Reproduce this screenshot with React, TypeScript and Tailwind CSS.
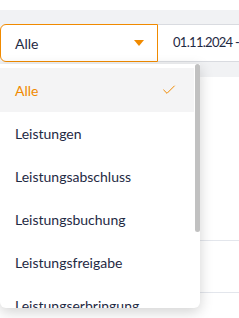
import { Check } from 'lucide-react'

const options = [
  'Alle',
  'Leistungen',
  'Leistungsabschluss',
  'Leistungsbuchung',
  'Leistungsfreigabe',
  'Leistungserbringung',
]

export default function App() {
  return (
    <div className="relative w-[239px] h-[318px] overflow-hidden bg-white font-['Lato',sans-serif] text-[#1f2a44]">
      <div className="h-[10px] bg-white" />
      <div className="bg-[#f1f2f4] pt-[14px] pb-[15px]">
        <div className="flex h-[38px]">
          <div className="flex w-[158px] shrink-0 items-center justify-between rounded-l-[6px] border border-[#f08a00] bg-white pl-[14px] pr-[13px] text-[14px]">
            <span>Alle</span>
            <svg width="10" height="6" viewBox="0 0 10 6">
              <path d="M0 0h10L5 6z" fill="#f08a00" />
            </svg>
          </div>
          <div className="flex min-w-0 flex-1 items-center overflow-hidden whitespace-nowrap border-y border-[#d9dbe0] bg-white pl-[15px] text-[13px] tracking-[-0.7px]">
            01.11.2024 - 30.11.2024
          </div>
        </div>
      </div>
      <div className="bg-white">
        <div className="h-[164px] border-b border-[#e3e6ec]" />
        <div className="h-[52px] border-b border-[#e3e6ec]" />
      </div>

      <div className="absolute left-0 top-[64px] flex h-[244px] w-[200px] overflow-hidden rounded-b-[6px] bg-white shadow-[0_4px_14px_rgba(0,0,0,0.18)]">
        <ul className="flex-1 pt-[4px] text-[14px]">
          {options.map((o, i) => (
            <li
              key={o}
              className={
                i === 0
                  ? 'flex h-[44px] items-center justify-between bg-[#f4f4f5] pl-[15px] pr-[17px] text-[#f08a00]'
                  : 'flex h-[43px] items-center pl-[15px]'
              }
            >
              <span>{o}</span>
              {i === 0 && <Check size={16} strokeWidth={1.5} color="#f08a00" />}
            </li>
          ))}
        </ul>
        <div className="w-[6px]">
          <div className="ml-[1px] h-[168px] w-[5px] rounded-[3px] bg-[#c1c1c1]" />
        </div>
      </div>
    </div>
  )
}
